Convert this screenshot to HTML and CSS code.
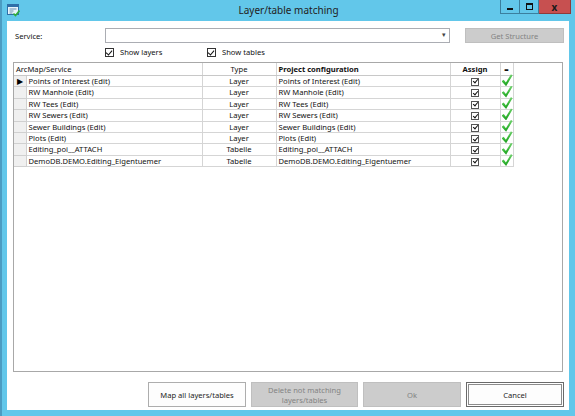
FILE: index.html
```html
<!DOCTYPE html>
<html lang="en">
<head>
    <meta charset="UTF-8">
    <title>Layer/table matching</title>
    <link rel="stylesheet" href="styles.css">
</head>
<body>
    <div class="window">
        <div class="titlebar">
            <svg class="app-icon" width="13" height="13" viewBox="0 0 13 13">
                <rect x="0.5" y="0.5" width="11" height="10" fill="#e8f4fb" stroke="#2f6fa8"/>
                <rect x="0.5" y="0.5" width="11" height="2.5" fill="#2f6fa8"/>
                <path d="M2.5 5h7M2.5 7h4M2.5 9h3" stroke="#6b8fb0" stroke-width="1"/>
                <path d="M6.5 9.5l2 2 4-5" stroke="#2fae3a" stroke-width="1.6" fill="none"/>
            </svg>
            <div class="title">Layer/table matching</div>
            <div class="controls">
                <div class="ctl"><span class="ico-min"></span></div>
                <div class="ctl"><span class="ico-max"></span></div>
                <div class="ctl close">x</div>
            </div>
        </div>

        <div class="client">
            <div class="service-row">
                <label class="service-label">Service:</label>
                <div class="combo"><span class="combo-arrow">▾</span></div>
                <button class="btn disabled get-btn">Get Structure</button>
            </div>

            <div class="options-row">
                <div class="opt"><span class="cb checked"></span>Show layers</div>
                <div class="opt"><span class="cb checked"></span>Show tables</div>
            </div>

            <div class="grid">
                <table>
                    <colgroup>
                        <col class="c-rh"><col class="c-name"><col class="c-type"><col class="c-proj"><col class="c-assign"><col class="c-eq">
                    </colgroup>
                    <thead>
                        <tr>
                            <th colspan="2" class="left">ArcMap/Service</th>
                            <th>Type</th>
                            <th class="left bold">Project configuration</th>
                            <th class="bold">Assign</th>
                            <th class="bold">=</th>
                        </tr>
                    </thead>
                    <tbody>
                        <tr>
                            <td class="rh"><span class="cur">&#9654;</span></td>
                            <td>Points of Interest (Edit)</td><td class="center">Layer</td><td>Points of Interest (Edit)</td>
                            <td class="center"><span class="cb small checked"></span></td><td class="eq"><i class="ok"></i></td>
                        </tr>
                        <tr>
                            <td class="rh"></td>
                            <td>RW Manhole (Edit)</td><td class="center">Layer</td><td>RW Manhole (Edit)</td>
                            <td class="center"><span class="cb small checked"></span></td><td class="eq"><i class="ok"></i></td>
                        </tr>
                        <tr>
                            <td class="rh"></td>
                            <td>RW Tees (Edit)</td><td class="center">Layer</td><td>RW Tees (Edit)</td>
                            <td class="center"><span class="cb small checked"></span></td><td class="eq"><i class="ok"></i></td>
                        </tr>
                        <tr>
                            <td class="rh"></td>
                            <td>RW Sewers (Edit)</td><td class="center">Layer</td><td>RW Sewers (Edit)</td>
                            <td class="center"><span class="cb small checked"></span></td><td class="eq"><i class="ok"></i></td>
                        </tr>
                        <tr>
                            <td class="rh"></td>
                            <td>Sewer Buildings (Edit)</td><td class="center">Layer</td><td>Sewer Buildings (Edit)</td>
                            <td class="center"><span class="cb small checked"></span></td><td class="eq"><i class="ok"></i></td>
                        </tr>
                        <tr>
                            <td class="rh"></td>
                            <td>Plots (Edit)</td><td class="center">Layer</td><td>Plots (Edit)</td>
                            <td class="center"><span class="cb small checked"></span></td><td class="eq"><i class="ok"></i></td>
                        </tr>
                        <tr>
                            <td class="rh"></td>
                            <td>Editing_poi__ATTACH</td><td class="center">Tabelle</td><td>Editing_poi__ATTACH</td>
                            <td class="center"><span class="cb small checked"></span></td><td class="eq"><i class="ok"></i></td>
                        </tr>
                        <tr>
                            <td class="rh"></td>
                            <td>DemoDB.DEMO.Editing_Eigentuemer</td><td class="center">Tabelle</td><td>DemoDB.DEMO.Editing_Eigentuemer</td>
                            <td class="center"><span class="cb small checked"></span></td><td class="eq"><i class="ok"></i></td>
                        </tr>
                    </tbody>
                </table>
            </div>

            <div class="button-row">
                <button class="btn map-btn">Map all layers/tables</button>
                <button class="btn disabled del-btn">Delete not matching<br>layers/tables</button>
                <button class="btn disabled ok-btn">Ok</button>
                <button class="btn default cancel-btn">Cancel</button>
            </div>
        </div>
    </div>
</body>
</html>
```

FILE: styles.css
```css
body {
    margin: 0;
    padding: 0;
    background: #62c7ea;
    font-family: 'Noto Sans', 'Open Sans', sans-serif;
    color: #111;
    overflow: hidden;
}

.window {
    width: 575px;
    height: 416px;
    box-sizing: border-box;
    border-left: 2px solid #4b9cc2;
    background: #62c7ea;
    display: flex;
    flex-direction: column;
}

/* title bar */
.titlebar {
    height: 21px;
    display: grid;
    grid-template-columns: 1fr auto 1fr;
    align-items: start;
}

.app-icon {
    margin: 4px 0 0 5px;
}

.title {
    font-size: 10px;
    line-height: 21px;
    color: #222;
}

.controls {
    justify-self: end;
    display: flex;
    margin-right: 4px;
}

.ctl {
    width: 18px;
    height: 13px;
    border: 1px solid #3b7f9e;
    border-top: none;
    border-left: none;
    display: flex;
    align-items: center;
    justify-content: center;
}

.ctl:first-child {
    border-left: 1px solid #3b7f9e;
}

.ctl.close {
    width: 31px;
    background: #c75050;
    border-color: #8f3a3a;
    font-size: 10px;
    font-weight: bold;
    line-height: 12px;
    color: #1a1a1a;
}

.ico-min {
    width: 6px;
    height: 2px;
    background: #111;
    margin-top: 4px;
}

.ico-max {
    width: 5px;
    height: 4px;
    border: 1px solid #111;
    border-top-width: 2px;
}

/* client area */
.client {
    flex: 1;
    margin: 0 6px 6px 5px;
    background: #fff;
    display: flex;
    flex-direction: column;
    font-size: 7.6px;
}

.service-row {
    display: flex;
    align-items: center;
    margin-top: 7px;
    height: 15px;
    padding-left: 8px;
}

.service-label {
    width: 90px;
}

.combo {
    width: 343px;
    height: 13px;
    border: 1px solid #abadb3;
    position: relative;
}

.combo-arrow {
    position: absolute;
    right: 3px;
    top: 1px;
    font-size: 7px;
    color: #444;
}

.btn {
    font-family: inherit;
    font-size: 7.6px;
    color: #1e1e1e;
    background: #fdfdfd;
    border: 1px solid #adadad;
    padding: 0;
    line-height: 10px;
}

.btn.disabled {
    background: #cccccc;
    border-color: #bfbfbf;
    color: #838383;
}

.btn.default {
    border-color: #6a6a6a;
    box-shadow: inset 0 0 0 1px #fff, inset 0 0 0 2px #8c8c8c;
}

.get-btn {
    width: 99px;
    height: 15px;
    margin-left: 15px;
}

.options-row {
    display: flex;
    align-items: center;
    height: 10px;
    margin-top: 4px;
    padding-left: 98px;
}

.opt {
    width: 102px;
    display: flex;
    align-items: center;
}

.cb {
    width: 7px;
    height: 7px;
    border: 1px solid #333;
    background: #fff;
    margin-right: 6px;
    position: relative;
}

.cb.checked::after {
    content: '';
    position: absolute;
    left: 1px;
    top: 0;
    width: 3px;
    height: 5px;
    border: solid #111;
    border-width: 0 1.5px 1.5px 0;
    transform: rotate(40deg);
}

.cb.small {
    width: 6px;
    height: 6px;
    margin: 0;
    display: inline-block;
    vertical-align: middle;
    border-color: #555;
}

.cb.small::after {
    left: 1.5px;
    top: -0.5px;
    width: 2px;
    height: 4px;
    border-width: 0 1.2px 1.2px 0;
}

/* data grid */
.grid {
    margin: 5px 0 0 6px;
    width: 550px;
    height: 310px;
    box-sizing: border-box;
    border: 1px solid #a8a8a8;
    background: #fff;
}

table {
    border-collapse: collapse;
    table-layout: fixed;
    width: 499px;
}

.c-rh { width: 12px; }
.c-name { width: 176px; }
.c-type { width: 74px; }
.c-proj { width: 174px; }
.c-assign { width: 50px; }
.c-eq { width: 13px; }

th, td {
    padding: 0 2px;
    white-space: nowrap;
    overflow: hidden;
    border: 1px solid #d5d5d5;
    border-top: none;
    font-weight: normal;
}

th {
    height: 12px;
    line-height: 12px;
    text-align: center;
    border-bottom-color: #c8c8c8;
}

th.left { text-align: left; }
th.bold { font-weight: bold; }

td {
    height: 10.4px;
    line-height: 10.4px;
}

tr > :first-child { border-left: none; }

td.center { text-align: center; }

td.rh {
    background: #f0f0f0;
    padding: 0;
    border-color: #d0d0d0;
}

.cur {
    font-size: 8px;
    display: block;
    text-align: center;
    line-height: 10px;
    color: #000;
}

td.eq {
    padding: 0;
    overflow: visible;
}

.ok {
    display: block;
    width: 11px;
    height: 12px;
    margin: -2px 0 0 1px;
    background: linear-gradient(160deg, #9ee89a, #2fb32f 60%, #1f8f24);
    clip-path: polygon(0% 58%, 20% 46%, 40% 70%, 86% 0%, 100% 10%, 42% 100%);
}

.button-row {
    display: flex;
    justify-content: flex-end;
    gap: 5px;
    margin-top: 10px;
    padding-right: 5px;
    height: 25px;
}

.map-btn { width: 98px; }
.del-btn { width: 107px; }
.ok-btn { width: 98px; }
.cancel-btn { width: 98px; }
```
